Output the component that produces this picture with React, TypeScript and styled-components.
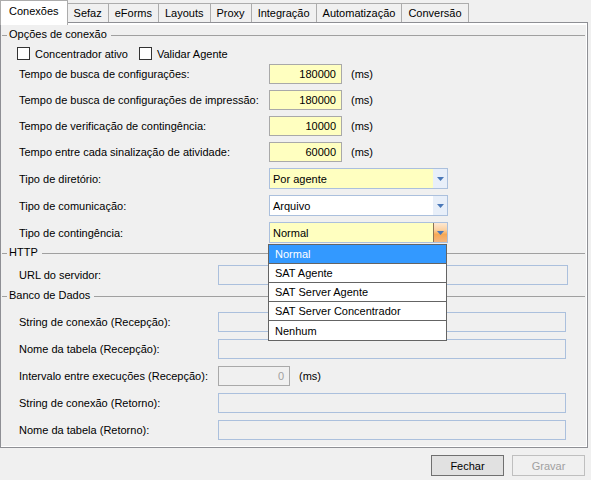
import React from 'react'
import styled, { createGlobalStyle, css } from 'styled-components'

const GlobalStyle = createGlobalStyle`
  html, body {
    margin: 0;
    padding: 0;
    background: #f0f0f0;
  }
  body {
    font-family: "Liberation Sans", Arial, sans-serif;
    font-size: 11px;
    color: #000;
  }
`

const Window = styled.div`
  width: 591px;
  height: 480px;
  display: flex;
  flex-direction: column;
  background: #f0f0f0;
  overflow: hidden;
`

const TabStrip = styled.div`
  display: flex;
  align-items: flex-end;
  height: 22px;
`

const Tab = styled.div<{ $active?: boolean }>`
  display: flex;
  align-items: center;
  box-sizing: border-box;
  height: 19px;
  padding: 0 6px 1px 6px;
  margin-left: -1px;
  border: 1px solid #acacac;
  border-bottom: none;
  background: #f0f0f0;
  white-space: nowrap;

  ${({ $active }) =>
    $active &&
    css`
      position: relative;
      z-index: 2;
      height: 25px;
      margin-left: 0;
      margin-bottom: -3px;
      padding: 0 8px 4px 8px;
      background: #fff;
    `}
`

const TabPanel = styled.div`
  position: relative;
  box-sizing: border-box;
  width: 588px;
  height: 426px;
  border: 1px solid #8e8f94;
  background: #fff;
  display: flex;
`

const Page = styled.div`
  flex: 1;
  margin: 2px 1px 1px 0;
  background: #f0f0f0;
  display: flex;
  flex-direction: column;
`

const GroupHeader = styled.div<{ $mt: number }>`
  display: flex;
  align-items: center;
  height: 16px;
  margin-top: ${({ $mt }) => $mt}px;
  padding: 0 1px;
`

const Dash = styled.span`
  width: 5px;
  border-top: 1px solid #a0a0a0;
  margin-right: 2px;
  margin-top: 2px;
`

const GroupTitle = styled.span`
  white-space: nowrap;
`

const Rule = styled.span`
  flex: 1;
  border-top: 1px solid #a0a0a0;
  margin-left: 4px;
  margin-top: 2px;
`

const Stack = styled.div<{ $mt: number; $gap: number }>`
  display: flex;
  flex-direction: column;
  gap: ${({ $gap }) => $gap}px;
  margin-top: ${({ $mt }) => $mt}px;
`

const CheckRow = styled.div`
  display: flex;
  align-items: center;
  height: 15px;
  margin-top: 4px;
  padding-left: 16px;
`

const CheckLabel = styled.label`
  display: flex;
  align-items: center;
  gap: 5px;
  margin-right: 11px;
`

const CheckBox = styled.span`
  box-sizing: border-box;
  width: 13px;
  height: 13px;
  border: 1px solid #333;
  background: #fff;
`

const FieldRow = styled.div<{ $label: number; $h: number }>`
  display: grid;
  grid-template-columns: ${({ $label }) => $label}px auto auto;
  justify-content: start;
  align-items: center;
  height: ${({ $h }) => $h}px;
  padding-left: 18px;
`

const FieldLabel = styled.span`
  white-space: nowrap;
`

const NumberInput = styled.div<{ $disabled?: boolean; $w: number }>`
  box-sizing: border-box;
  width: ${({ $w }) => $w}px;
  height: 20px;
  display: flex;
  align-items: center;
  justify-content: flex-end;
  padding-right: 5px;
  border: 1px solid #a9a9a9;
  background: ${({ $disabled }) => ($disabled ? '#f0f0f0' : '#ffffc0')};
  color: ${({ $disabled }) => ($disabled ? '#a0a0a0' : '#000')};
`

const Unit = styled.span`
  margin-left: 9px;
`

const TextInput = styled.div<{ $w: number }>`
  box-sizing: border-box;
  width: ${({ $w }) => $w}px;
  height: 20px;
  border: 1px solid #abc0dd;
  background: #f0f0f0;
`

const SelectWrap = styled.div`
  position: relative;
`

const SelectBox = styled.div<{ $bg: string }>`
  box-sizing: border-box;
  width: 179px;
  height: 21px;
  display: flex;
  border: 1px solid #abc0dd;
  background: ${({ $bg }) => $bg};
`

const SelectText = styled.span`
  flex: 1;
  display: flex;
  align-items: center;
  padding-left: 3px;
`

const ArrowButton = styled.span<{ $hot?: boolean }>`
  box-sizing: border-box;
  width: 14px;
  display: flex;
  align-items: center;
  justify-content: center;
  background: #e8eff9;

  ${({ $hot }) =>
    $hot &&
    css`
      border-left: 1px solid #8a7356;
      background: linear-gradient(to bottom, #fde8d2 0%, #fbd2a4 35%, #f6a855 60%, #f3b680 100%);
    `}
`

const DropList = styled.ul`
  position: absolute;
  z-index: 5;
  top: 22px;
  left: -1px;
  box-sizing: border-box;
  width: 179px;
  margin: 0;
  padding: 0;
  list-style: none;
  border: 1px solid #646464;
  box-shadow: inset 0 0 0 1px #7a7a7a;
  background: #fff;
`

const DropItem = styled.li<{ $selected?: boolean }>`
  box-sizing: border-box;
  height: 19px;
  display: flex;
  align-items: center;
  padding-left: 6px;
  border-bottom: 1px solid #646464;
  background: ${({ $selected }) => ($selected ? '#3399ff' : '#fff')};
  color: ${({ $selected }) => ($selected ? '#fff' : '#000')};

  &:last-child {
    border-bottom: none;
  }
`

const Footer = styled.div`
  display: flex;
  justify-content: flex-end;
  gap: 8px;
  padding: 7px 6px 0 0;
`

const Button = styled.button<{ $disabled?: boolean }>`
  box-sizing: border-box;
  width: 73px;
  height: 21px;
  padding: 0;
  font-family: inherit;
  font-size: 11px;
  border: 1px solid ${({ $disabled }) => ($disabled ? '#bfbfbf' : '#707070')};
  background: ${({ $disabled }) => ($disabled ? '#f0f0f0' : '#e1e1e1')};
  color: ${({ $disabled }) => ($disabled ? '#a0a0a0' : '#000')};
`

const Arrow = () => (
  <svg width="7" height="4" viewBox="0 0 7 4">
    <polygon points="0,0 7,0 3.5,4" fill="#4a78b8" />
  </svg>
)

const tabs = ['Conexões', 'Sefaz', 'eForms', 'Layouts', 'Proxy', 'Integração', 'Automatização', 'Conversão']

const timeRows = [
  { label: 'Tempo de busca de configurações:', value: '180000' },
  { label: 'Tempo de busca de configurações de impressão:', value: '180000' },
  { label: 'Tempo de verificação de contingência:', value: '10000' },
  { label: 'Tempo entre cada sinalização de atividade:', value: '60000' },
]

const contingencyOptions = ['Normal', 'SAT Agente', 'SAT Server Agente', 'SAT Server Concentrador', 'Nenhum']

export default function App() {
  return (
    <Window>
      <GlobalStyle />
      <TabStrip>
        {tabs.map((t, i) => (
          <Tab key={t} $active={i === 0}>
            {t}
          </Tab>
        ))}
      </TabStrip>

      <TabPanel>
        <Page>
          <GroupHeader $mt={1}>
            <Dash />
            <GroupTitle>Opções de conexão</GroupTitle>
            <Rule />
          </GroupHeader>

          <CheckRow>
            <CheckLabel>
              <CheckBox />
              Concentrador ativo
            </CheckLabel>
            <CheckLabel>
              <CheckBox />
              Validar Agente
            </CheckLabel>
          </CheckRow>

          <Stack $mt={3} $gap={6}>
            {timeRows.map((r) => (
              <FieldRow key={r.label} $label={250} $h={20}>
                <FieldLabel>{r.label}</FieldLabel>
                <NumberInput $w={73}>{r.value}</NumberInput>
                <Unit>(ms)</Unit>
              </FieldRow>
            ))}
          </Stack>

          <Stack $mt={6} $gap={6}>
            <FieldRow $label={250} $h={21}>
              <FieldLabel>Tipo de diretório:</FieldLabel>
              <SelectBox $bg="#ffffc0">
                <SelectText>Por agente</SelectText>
                <ArrowButton>
                  <Arrow />
                </ArrowButton>
              </SelectBox>
            </FieldRow>
            <FieldRow $label={250} $h={21}>
              <FieldLabel>Tipo de comunicação:</FieldLabel>
              <SelectBox $bg="#fff">
                <SelectText>Arquivo</SelectText>
                <ArrowButton>
                  <Arrow />
                </ArrowButton>
              </SelectBox>
            </FieldRow>
            <FieldRow $label={250} $h={21}>
              <FieldLabel>Tipo de contingência:</FieldLabel>
              <SelectWrap>
                <SelectBox $bg="#ffffc0">
                  <SelectText>Normal</SelectText>
                  <ArrowButton $hot>
                    <Arrow />
                  </ArrowButton>
                </SelectBox>
                <DropList>
                  {contingencyOptions.map((o, i) => (
                    <DropItem key={o} $selected={i === 0}>
                      {o}
                    </DropItem>
                  ))}
                </DropList>
              </SelectWrap>
            </FieldRow>
          </Stack>

          <GroupHeader $mt={1}>
            <Dash />
            <GroupTitle>HTTP</GroupTitle>
            <Rule />
          </GroupHeader>

          <Stack $mt={5} $gap={0}>
            <FieldRow $label={199} $h={20}>
              <FieldLabel>URL do servidor:</FieldLabel>
              <TextInput $w={350} />
            </FieldRow>
          </Stack>

          <GroupHeader $mt={2}>
            <Dash />
            <GroupTitle>Banco de Dados</GroupTitle>
            <Rule />
          </GroupHeader>

          <Stack $mt={9} $gap={7}>
            <FieldRow $label={199} $h={20}>
              <FieldLabel>String de conexão (Recepção):</FieldLabel>
              <TextInput $w={348} />
            </FieldRow>
            <FieldRow $label={199} $h={20}>
              <FieldLabel>Nome da tabela (Recepção):</FieldLabel>
              <TextInput $w={348} />
            </FieldRow>
            <FieldRow $label={199} $h={20}>
              <FieldLabel>Intervalo entre execuções (Recepção):</FieldLabel>
              <NumberInput $w={72} $disabled>
                0
              </NumberInput>
              <Unit>(ms)</Unit>
            </FieldRow>
            <FieldRow $label={199} $h={20}>
              <FieldLabel>String de conexão (Retorno):</FieldLabel>
              <TextInput $w={348} />
            </FieldRow>
            <FieldRow $label={199} $h={20}>
              <FieldLabel>Nome da tabela (Retorno):</FieldLabel>
              <TextInput $w={348} />
            </FieldRow>
          </Stack>
        </Page>
      </TabPanel>

      <Footer>
        <Button>Fechar</Button>
        <Button $disabled>Gravar</Button>
      </Footer>
    </Window>
  )
}
